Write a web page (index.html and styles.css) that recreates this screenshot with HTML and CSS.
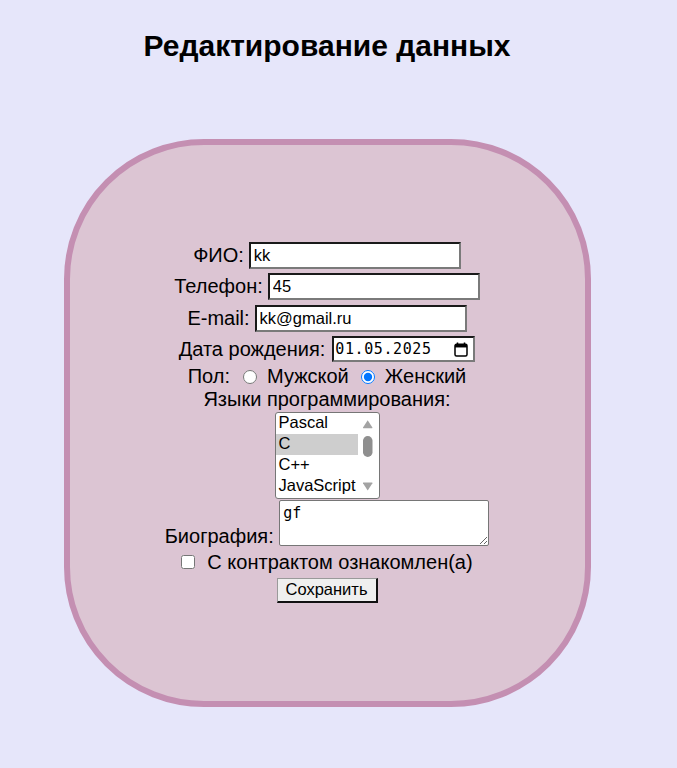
FILE: index.html
```html
<!DOCTYPE html>
<html lang="ru">
<head>
<meta charset="utf-8">
<title>Редактирование данных</title>
<link rel="stylesheet" href="styles.css">
</head>
<body>
<div class="page">
  <h1 class="title">Редактирование данных</h1>
  <form class="card">
    <div class="row field-row">
      <label class="lbl" for="fio">ФИО:</label>
      <input class="text-input" id="fio" type="text" value="kk">
    </div>
    <div class="row field-row">
      <label class="lbl" for="phone">Телефон:</label>
      <input class="text-input" id="phone" type="text" value="45">
    </div>
    <div class="row field-row">
      <label class="lbl" for="email">E-mail:</label>
      <input class="text-input" id="email" type="text" value="kk@gmail.ru">
    </div>
    <div class="row date-row">
      <label class="lbl" for="bdate">Дата рождения:</label>
      <div class="date-field">
        <input class="date-text" id="bdate" type="text" value="01.05.2025">
        <svg class="cal-icon" width="14" height="15" viewBox="0 0 14 15" aria-hidden="true">
          <path d="M3.5 0.5v2.5M10.5 0.5v2.5" stroke="#000" stroke-width="1.5" fill="none"/>
          <rect x="1" y="2.25" width="12" height="11.75" rx="1.5" fill="none" stroke="#000" stroke-width="1.5"/>
          <rect x="1" y="2.25" width="12" height="3.2" fill="#000"/>
        </svg>
      </div>
    </div>
    <div class="row sex-row">
      <span class="lbl">Пол:</span>
      <input class="radio radio-first" type="radio" name="sex" id="male">
      <label class="radio-lbl" for="male">Мужской</label>
      <input class="radio" type="radio" name="sex" id="female" checked>
      <label class="radio-lbl" for="female">Женский</label>
    </div>
    <div class="row lang-title">Языки программирования:</div>
    <div class="listbox" role="listbox" aria-multiselectable="true">
      <div class="options">
        <div class="opt">Pascal</div>
        <div class="opt selected">C</div>
        <div class="opt">C++</div>
        <div class="opt">JavaScript</div>
      </div>
      <div class="sbar">
        <svg width="21" height="85" viewBox="0 0 21 85" aria-hidden="true">
          <path d="M9.7 7.2 L14.4 14.6 Q14.7 15.2 14 15.2 L5.4 15.2 Q4.7 15.2 5 14.6 Z" fill="#a3a3a3"/>
          <rect x="5" y="23" width="9.5" height="21" rx="4.75" fill="#8f8f8f"/>
          <path d="M9.7 77.6 L14.4 70.2 Q14.7 69.6 14 69.6 L5.4 69.6 Q4.7 69.6 5 70.2 Z" fill="#a3a3a3"/>
        </svg>
      </div>
    </div>
    <div class="bio-row">
      <label class="lbl" for="bio">Биография:</label>
      <textarea class="bio" id="bio">gf</textarea>
    </div>
    <div class="row check-row">
      <input class="check" type="checkbox" id="agree">
      <label class="lbl" for="agree">С контрактом ознакомлен(а)</label>
    </div>
    <button class="save" type="button">Сохранить</button>
  </form>
</div>
</body>
</html>
```

FILE: styles.css
```css
html, body {
  margin: 0;
  padding: 0;
}

body {
  background: #e6e6fa;
  font-family: "Liberation Sans", Arial, sans-serif;
  color: #000;
}

.page {
  width: 654px;
  padding-top: 29px;
}

.title {
  margin: 0 0 75.5px;
  text-align: center;
  font-size: 30px;
  font-weight: bold;
  line-height: normal;
}

.card {
  box-sizing: border-box;
  width: 527px;
  height: 568px;
  margin: 0 auto;
  border: 6px solid #c48fb2;
  border-radius: 140px;
  background: #dcc5d3;
  display: flex;
  flex-direction: column;
  align-items: center;
  justify-content: center;
  font-size: 20px;
}

.row {
  display: flex;
  align-items: center;
  justify-content: center;
}

.lbl {
  line-height: normal;
}

.field-row {
  gap: 5px;
  margin-bottom: 4.5px;
}

.text-input {
  box-sizing: border-box;
  width: 212px;
  height: 27px;
  margin: 0;
  padding: 1px 3px;
  border-style: solid;
  border-width: 2px;
  border-color: #1a1a1a #7a7a7a #7a7a7a #1a1a1a;
  background: #fff;
  font-family: "Liberation Sans", Arial, sans-serif;
  font-size: 16.5px;
  color: #000;
  outline: none;
}

.date-row {
  gap: 7px;
}

.date-field {
  box-sizing: border-box;
  width: 143px;
  height: 26px;
  display: flex;
  align-items: center;
  border-style: solid;
  border-width: 2px;
  border-color: #1a1a1a #7a7a7a #7a7a7a #1a1a1a;
  background: #fff;
  padding: 0 5px 0 1px;
}

.date-text {
  width: 104px;
  margin: 0;
  padding: 0;
  border: 0;
  background: transparent;
  font-family: "DejaVu Sans Mono", monospace;
  font-size: 15px;
  letter-spacing: 0.6px;
  color: #000;
  outline: none;
}

.cal-icon {
  margin-left: auto;
  display: block;
}

.sex-row {
  margin-top: 3px;
  height: 22.5px;
}

.radio {
  width: 14px;
  height: 14px;
  margin: 0 10px 0 12px;
}

.radio-first {
  margin-left: 13px;
}

.radio-lbl {
  line-height: normal;
}

.lang-title {
  line-height: normal;
}

.listbox {
  box-sizing: border-box;
  width: 105px;
  height: 87px;
  margin-top: 1px;
  border: 1px solid #767676;
  border-radius: 3px;
  background: #fff;
  display: flex;
  overflow: hidden;
}

.options {
  width: 82px;
  font-size: 16.5px;
}

.opt {
  height: 21px;
  line-height: 19px;
  padding-left: 3px;
  white-space: nowrap;
}

.opt.selected {
  background: #cecece;
}

.sbar {
  flex: 1;
}

.sbar svg {
  display: block;
}

.bio-row {
  margin-top: 1.5px;
  text-align: center;
  line-height: normal;
}

.bio {
  box-sizing: border-box;
  width: 210px;
  height: 45.5px;
  margin: 0;
  padding: 3px 3px;
  border: 1px solid #767676;
  border-radius: 2px;
  background: #fff;
  font-family: "DejaVu Sans Mono", monospace;
  font-size: 15px;
  vertical-align: -3px;
  resize: both;
}

.check-row {
  margin-top: 3.5px;
}

.check {
  width: 14px;
  height: 14px;
  margin: 0 12px 2px 0;
}

.save {
  box-sizing: border-box;
  height: 25.5px;
  margin-top: 3.4px;
  padding: 0 8px;
  border-style: solid;
  border-width: 1px 2px 2px 1px;
  border-color: #9a9a9a #111 #111 #9a9a9a;
  background: #efefef;
  font-family: "Liberation Sans", Arial, sans-serif;
  font-size: 16.5px;
  color: #000;
}
```
